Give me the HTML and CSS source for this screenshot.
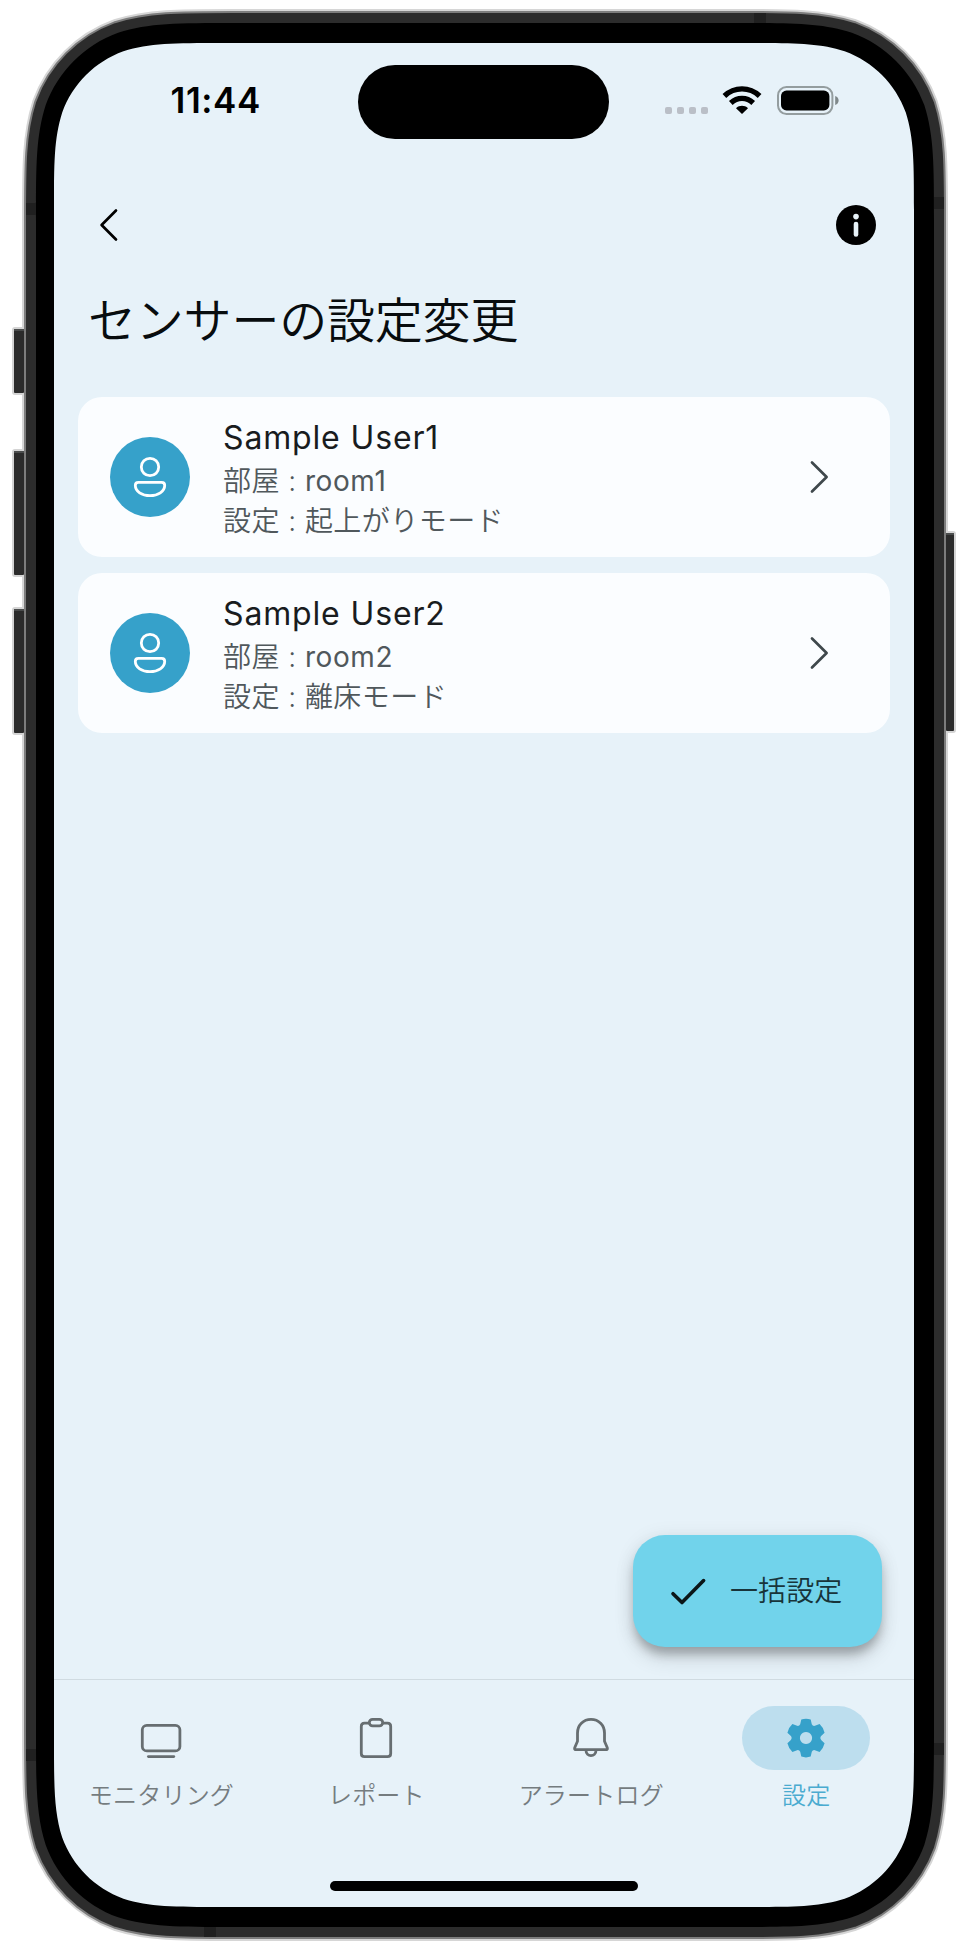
FILE: index.html
```html
<!DOCTYPE html>
<html lang="ja">
<head>
<meta charset="utf-8">
<title>センサーの設定変更</title>
<link rel="stylesheet" href="styles.css">
</head>
<body>
<div class="device">
  <svg class="device-frame" width="959" height="1943" viewBox="0 0 959 1943" aria-hidden="true">
    <defs>
      <path id="body" d="M36,1728.3v-1506.6c0,-57.2 0,-85.8 9.7,-116.6c12.2,-33.6 38.7,-60.1 72.4,-72.4c30.8,-9.7 59.4,-9.7 116.6,-9.7h500.6c57.2,0 85.8,0 116.6,9.7c33.6,12.2 60.1,38.7 72.4,72.4c9.7,30.8 9.7,59.4 9.7,116.6v1506.6c0,57.2 0,85.8 -9.7,116.6c-12.2,33.6 -38.7,60.1 -72.4,72.4c-30.8,9.7 -59.4,9.7 -116.6,9.7h-500.6c-57.2,0 -85.8,0 -116.6,-9.7c-33.6,-12.2 -60.1,-38.7 -72.4,-72.4c-9.7,-30.8 -9.7,-59.4 -9.7,-116.6z"/>
    </defs>
    <g fill="#d4d4d4">
      <rect x="12" y="327" width="20" height="68" rx="3"/>
      <rect x="12" y="449" width="20" height="128" rx="3"/>
      <rect x="12" y="607" width="20" height="128" rx="3"/>
      <rect x="936" y="531" width="20" height="202" rx="3"/>
    </g>
    <use href="#body" stroke="#d6d6d6" stroke-width="28"/>
    <g fill="#2b2b2b">
      <rect x="14" y="329" width="10" height="64" rx="1"/>
      <rect x="14" y="451" width="10" height="124" rx="1"/>
      <rect x="14" y="609" width="10" height="124" rx="1"/>
      <rect x="946" y="533" width="8" height="198" rx="1"/>
    </g>
    <g fill="#4a4c4c">
      <rect x="14" y="329" width="10" height="2"/>
      <rect x="14" y="451" width="10" height="2"/>
      <rect x="14" y="609" width="10" height="2"/>
      <rect x="946" y="533" width="8" height="2"/>
    </g>
    <use href="#body" stroke="#7d7d7d" stroke-width="24"/>
    <use href="#body" stroke="#2c2c2c" stroke-width="20"/>
    <use href="#body"/>
    <g fill="#202020">
      <rect x="754" y="13" width="12" height="10"/>
      <rect x="26" y="203" width="10" height="12"/>
      <rect x="934" y="197" width="10" height="12"/>
      <rect x="26" y="1749" width="10" height="12"/>
      <rect x="934" y="1743" width="10" height="12"/>
      <rect x="204" y="1927" width="12" height="10"/>
    </g>
  </svg>

  <div class="screen">
    <header class="status-bar">
      <div class="clock">11:44</div>
      <div class="island"></div>
      <div class="indicators">
        <div class="signal"><i></i><i></i><i></i><i></i></div>
        <svg class="wifi" width="40" height="28" viewBox="0 0 40 28" fill="none" stroke="#000">
          <path d="M2.4,10C12.5,0.500 27.5,0.500 37.600,10" stroke-width="5.400"/>
          <path d="M8.800,16.900C15.3,10.900 24.7,10.900 31.200,16.900" stroke-width="5.400"/>
          <path d="M20,28L14,22.2C17.5,19 22.5,19 26,22.2z" fill="#000" stroke="none"/>
        </svg>
        <svg class="battery" width="63" height="30" viewBox="0 0 63 30">
          <rect x="1" y="1" width="54.4" height="27" rx="8.5" fill="none" stroke="#949d9f" stroke-width="2"/>
          <rect x="4" y="4.6" width="48.4" height="19.8" rx="5.5"/>
          <path d="M58.2,10c4.6,1.6 4.6,7.4 0,9z" fill="#7f888a"/>
        </svg>
      </div>
    </header>

    <div class="app-bar">
      <svg width="48" height="48" viewBox="0 0 48 48" fill="none" stroke="#000" stroke-width="2.7" stroke-linecap="round" stroke-linejoin="round"><path d="M30,9.5L15.6,24L30,38.5"/></svg>
      <svg width="48" height="48" viewBox="0 0 48 48"><circle cx="24" cy="24" r="20"/><circle cx="24" cy="15.6" r="2.8" fill="#e7f2f9"/><path d="M24,23V33.5" stroke="#e7f2f9" stroke-width="4.6" stroke-linecap="round"/></svg>
    </div>

    <h1 class="title">センサーの設定変更</h1>

    <main class="list">
      <section class="card">
        <div class="avatar">
          <svg width="48" height="48" viewBox="0 0 48 48" fill="none" stroke="#fff" stroke-width="2.8"><circle cx="24" cy="14" r="8.7"/><path d="M12.4,29.3H35.6Q38.7,29.3 38.7,32.2C38.7,38.5 32,42.7 24,42.7S9.3,38.5 9.3,32.2Q9.3,29.3 12.4,29.3z"/></svg>
        </div>
        <div class="info">
          <div class="name">Sample User1</div>
          <div class="detail">部屋 : <span class="latin">room1</span></div>
          <div class="detail">設定 : 起上がりモード</div>
        </div>
        <svg width="48" height="48" viewBox="0 0 48 48" fill="none" stroke="#3f484c" stroke-width="2.7" stroke-linecap="round" stroke-linejoin="round"><path d="M16,9.5L30.6,24L16,38.5"/></svg>
      </section>
      <section class="card">
        <div class="avatar">
          <svg width="48" height="48" viewBox="0 0 48 48" fill="none" stroke="#fff" stroke-width="2.8"><circle cx="24" cy="14" r="8.7"/><path d="M12.4,29.3H35.6Q38.7,29.3 38.7,32.2C38.7,38.5 32,42.7 24,42.7S9.3,38.5 9.3,32.2Q9.3,29.3 12.4,29.3z"/></svg>
        </div>
        <div class="info">
          <div class="name">Sample User2</div>
          <div class="detail">部屋 : <span class="latin">room2</span></div>
          <div class="detail">設定 : 離床モード</div>
        </div>
        <svg width="48" height="48" viewBox="0 0 48 48" fill="none" stroke="#3f484c" stroke-width="2.7" stroke-linecap="round" stroke-linejoin="round"><path d="M16,9.5L30.6,24L16,38.5"/></svg>
      </section>
    </main>

    <div class="action">
      <div class="fab">
        <svg width="48" height="48" viewBox="0 0 48 48" fill="none" stroke="#0b1618" stroke-width="3.6" stroke-linecap="round" stroke-linejoin="round"><path d="M9,26.7L18,35.5L39.6,13.6"/></svg>
        <span class="fab-label">一括設定</span>
      </div>
    </div>

    <nav class="nav">
      <div class="tab">
        <div class="pill">
          <svg width="48" height="48" viewBox="0 0 48 48" fill="none" stroke="#676e71" stroke-width="2.8" stroke-linecap="round"><rect x="5.3" y="11.3" width="37.6" height="25.6" rx="4.5"/><path d="M11.4,42.6H36.8"/></svg>
        </div>
        <span>モニタリング</span>
      </div>
      <div class="tab">
        <div class="pill">
          <svg width="48" height="48" viewBox="0 0 48 48" fill="none" stroke="#676e71" stroke-width="2.8"><path d="M17.3,9.2H12.5Q9.3,9.2 9.3,12.4V39.5Q9.3,42.7 12.5,42.7H35.5Q38.7,42.7 38.7,39.5V12.4Q38.7,9.2 35.5,9.2H30.7"/><rect x="17.3" y="5.3" width="13.4" height="6.6" rx="3.3"/></svg>
        </div>
        <span>レポート</span>
      </div>
      <div class="tab">
        <div class="pill">
          <svg width="48" height="48" viewBox="0 0 48 48" fill="none" stroke="#676e71" stroke-width="2.8" stroke-linejoin="round"><path d="M24,5.3C31.7,5.3 37.5,11.2 37.5,18.9V27.2L40.3,33.8Q40.7,35.6 39.5,35.6H8.5Q7.3,35.6 7.7,33.8L10.5,27.2V18.9C10.5,11.2 16.3,5.3 24,5.3z"/><path d="M19,36.3C19,43.5 29,43.5 29,36.3"/></svg>
        </div>
        <span>アラートログ</span>
      </div>
      <div class="tab active">
        <div class="pill">
          <svg width="48" height="48" viewBox="0 0 48 48" fill="#36a1ca" fill-rule="evenodd"><path d="M19.3,5.6Q24,3.8 28.7,5.6L29.8,10.3Q31,12.7 33.6,11.6L37.6,10.1Q41.5,13.7 42.6,18.7L39.4,21.8Q37.3,24 39.4,26.2L42.6,29.3Q41.5,34.3 37.6,37.9L33.6,36.4Q31,35.3 29.8,37.7L28.7,42.6Q24,44.2 19.3,42.6L18.2,37.7Q17,35.3 14.4,36.4L10.4,37.9Q6.5,34.3 5.4,29.3L8.6,26.2Q10.7,24 8.6,21.8L5.4,18.7Q6.5,13.7 10.4,10.1L14.4,11.6Q17,12.7 18.2,10.3zM24,17.9a6.1,6.1 0 1 0 .01,0z"/></svg>
        </div>
        <span>設定</span>
      </div>
    </nav>
    <div class="home-bar"></div>
  </div>
</div>
</body>
</html>
```
FILE: styles.css
```css
* { box-sizing: border-box; }

body {
  margin: 0;
  background: #fff;
  font-family: Inter, "Noto Sans CJK JP", sans-serif;
  font-weight: 350;
}

svg { display: block; flex: none; }

.device {
  position: relative;
  width: 959px;
  height: 1943px;
  padding: 43px 45px 36px 54px;
  overflow: hidden;
}

.device-frame {
  position: absolute;
  inset: 0;
}

.screen {
  position: relative;
  display: flex;
  flex-direction: column;
  width: 860px;
  height: 1864px;
  background: #e7f2f9;
  clip-path: path("M0,1695.9v-1527.8c0,-48.4 0,-72.6 8.2,-98.7c10.4,-28.5 32.8,-50.9 61.2,-61.2c26.1,-8.2 50.3,-8.2 98.7,-8.2h523.8c48.4,0 72.6,0 98.7,8.2c28.5,10.4 50.9,32.8 61.2,61.2c8.2,26.1 8.2,50.3 8.2,98.7v1527.8c0,48.4 0,72.6 -8.2,98.7c-10.4,28.5 -32.8,50.9 -61.2,61.2c-26.1,8.2 -50.3,8.2 -98.7,8.2h-523.8c-48.4,0 -72.6,0 -98.7,-8.2c-28.5,-10.4 -50.9,-32.8 -61.2,-61.2c-8.2,-26.1 -8.2,-50.3 -8.2,-98.7z");
}

.status-bar {
  display: grid;
  grid-template-columns: 304.4px 251px 1fr;
  height: 126px;
  padding-top: 22.4px;
}

.clock {
  padding: 14px 0 0 116.5px;
  font-size: 35px;
  font-weight: 600;
  line-height: 42px;
  letter-spacing: 0.6px;
}

.island {
  height: 74px;
  border-radius: 37px;
  background: #000;
}

.indicators {
  display: flex;
  padding: 20.6px 0 0 55.6px;
}

.signal {
  display: flex;
  gap: 5px;
  padding-top: 21px;
  margin-right: 14px;
}

.signal i {
  width: 7px;
  height: 7px;
  border-radius: 2px;
  background: #babfc7;
}

.battery { margin-left: 15px; }

.app-bar {
  display: flex;
  justify-content: space-between;
  align-items: center;
  height: 112px;
  padding: 0 34px 0 32px;
}

.title {
  margin: 0;
  padding: 1px 0 0 34px;
  height: 116px;
  font-size: 48px;
  font-weight: 350;
  line-height: 78px;
  letter-spacing: -0.2px;
  color: #080c0e;
}

.list {
  display: flex;
  flex-direction: column;
  gap: 16px;
  padding: 0 24px;
}

.card {
  display: flex;
  align-items: center;
  height: 160px;
  padding: 0 46px 0 32px;
  border-radius: 24px;
  background: #fbfdff;
}

.avatar {
  display: flex;
  align-items: center;
  justify-content: center;
  width: 80px;
  height: 80px;
  border-radius: 50%;
  background: #36a1ca;
}

.info {
  flex: 1;
  padding: 1px 0 0 33px;
}

.name {
  font-size: 32px;
  font-weight: 400;
  line-height: 46px;
  letter-spacing: 0.85px;
  color: #191c1e;
}

.detail {
  font-size: 28px;
  line-height: 40px;
  letter-spacing: 0.45px;
  color: #50585c;
}

.latin {
  font-weight: 400;
  letter-spacing: 0.6px;
}

.action {
  display: flex;
  justify-content: flex-end;
  align-items: flex-end;
  flex: 1;
  padding: 0 32px 32px 0;
}

.fab {
  display: flex;
  align-items: center;
  gap: 18px;
  width: 249px;
  height: 112px;
  padding: 0 0 0 31px;
  border-radius: 32px;
  background: #71d3eb;
  box-shadow: 0 9px 10px -2px rgba(0, 0, 0, .22), 0 12px 20px rgba(0, 0, 0, .12), 0 2px 20px rgba(0, 0, 0, .08);
}

.fab-label {
  font-size: 28px;
  line-height: 40px;
  letter-spacing: 0.1px;
  color: #18343a;
}

.nav {
  display: grid;
  grid-template-columns: repeat(4, 1fr);
  height: 169px;
  padding: 26px 0.4px 0 0;
  border-top: 1px solid #d0dbe1;
}

.tab {
  display: flex;
  flex-direction: column;
  align-items: center;
  gap: 9px;
  font-size: 24px;
  line-height: 34px;
  letter-spacing: 0.2px;
  color: #757c7f;
}

.pill {
  display: flex;
  align-items: center;
  justify-content: center;
  width: 128px;
  height: 64px;
  border-radius: 32px;
}

.active { color: #4aabd0; }
.active .pill { background: #bddeee; }

.home-bar {
  align-self: center;
  width: 308px;
  height: 10px;
  margin: 33px 0 16px;
  border-radius: 5px;
  background: #000;
}
```
